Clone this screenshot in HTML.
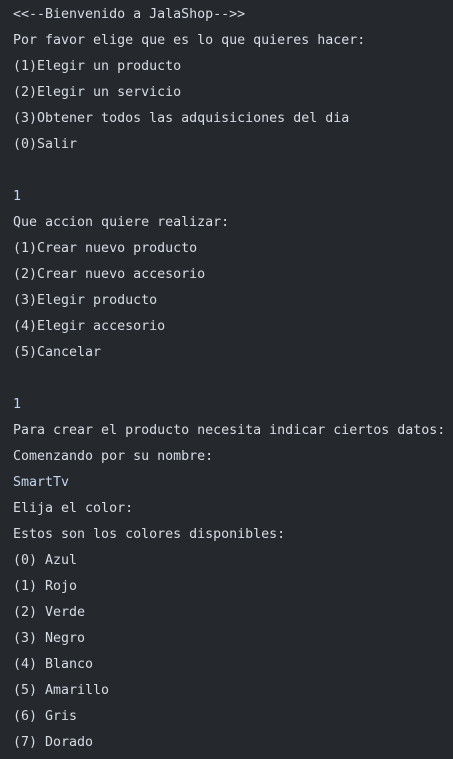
<!DOCTYPE html>
<html><head><meta charset="utf-8"><style>
html,body{margin:0;padding:0;background:#25282c;width:453px;height:759px;overflow:hidden}
pre{margin:0;padding:0 0 0 13px;font-family:"DejaVu Sans Mono","Liberation Mono",monospace;font-size:13.3px;line-height:26px;color:#d6dde5;white-space:pre}
.i{color:#c4d6ee}
</style></head><body><pre style="margin-top:2px">&lt;&lt;--Bienvenido a JalaShop--&gt;&gt;
Por favor elige que es lo que quieres hacer:
(1)Elegir un producto
(2)Elegir un servicio
(3)Obtener todos las adquisiciones del dia
(0)Salir

<span class="i">1</span>
Que accion quiere realizar:
(1)Crear nuevo producto
(2)Crear nuevo accesorio
(3)Elegir producto
(4)Elegir accesorio
(5)Cancelar

<span class="i">1</span>
Para crear el producto necesita indicar ciertos datos:
Comenzando por su nombre:
<span class="i">SmartTv</span>
Elija el color:
Estos son los colores disponibles:
(0) Azul
(1) Rojo
(2) Verde
(3) Negro
(4) Blanco
(5) Amarillo
(6) Gris
(7) Dorado</pre></body></html>
